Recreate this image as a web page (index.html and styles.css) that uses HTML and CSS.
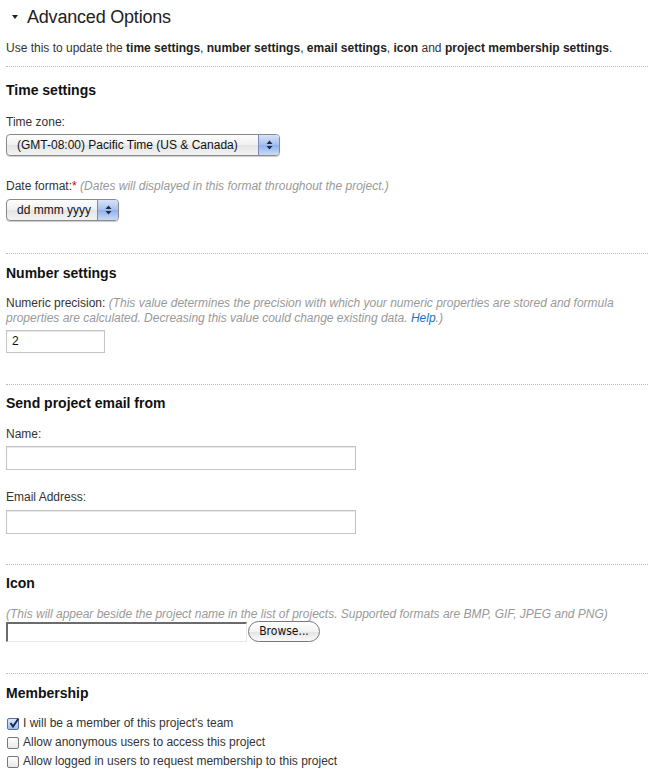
FILE: index.html
```html
<!DOCTYPE html>
<html>
<head>
<meta charset="utf-8">
<link rel="stylesheet" href="styles.css">
</head>
<body>
<div class="page">
  <div class="title">
    <span class="tri"></span>
    <span class="title-text">Advanced Options</span>
  </div>
  <p class="intro">Use this to update the <b>time settings</b>, <b>number settings</b>, <b>email settings</b>, <b>icon</b> and <b>project membership settings</b>.</p>

  <section class="sec sec-time">
    <h2>Time settings</h2>
    <div class="label">Time zone:</div>
    <div class="select sel-tz"><span class="sel-text">(GMT-08:00) Pacific Time (US &amp; Canada)</span><span class="sel-arrows"><svg width="9" height="12" viewBox="0 0 9 12"><path d="M4.5 1.5 L7.5 5 L1.5 5 Z M1.5 7 L7.5 7 L4.5 10.5 Z" fill="#1d2a4a"/></svg></span></div>
    <div class="label label-date">Date format:<span class="req">*</span> <span class="hint">(Dates will displayed in this format throughout the project.)</span></div>
    <div class="select sel-date"><span class="sel-text">dd mmm yyyy</span><span class="sel-arrows"><svg width="9" height="12" viewBox="0 0 9 12"><path d="M4.5 1.5 L7.5 5 L1.5 5 Z M1.5 7 L7.5 7 L4.5 10.5 Z" fill="#1d2a4a"/></svg></span></div>
  </section>

  <section class="sec sec-num">
    <h2>Number settings</h2>
    <div class="label para">Numeric precision: <span class="hint">(This value determines the precision with which your numeric properties are stored and formula properties are calculated. Decreasing this value could change existing data. <a class="help" href="#">Help</a>.)</span></div>
    <div class="textbox tb-num">2</div>
  </section>

  <section class="sec sec-mail">
    <h2>Send project email from</h2>
    <div class="label">Name:</div>
    <div class="textbox tb-wide tb-name"></div>
    <div class="label label-email">Email Address:</div>
    <div class="textbox tb-wide tb-email"></div>
  </section>

  <section class="sec sec-icon">
    <h2>Icon</h2>
    <div class="hint icon-hint">(This will appear beside the project name in the list of projects. Supported formats are BMP, GIF, JPEG and PNG)</div>
    <div class="file">
      <span class="file-box"></span>
      <span class="browse">Browse...</span>
    </div>
  </section>

  <section class="sec sec-member">
    <h2>Membership</h2>
    <ul class="checks">
      <li><span class="cb cb-on"><svg width="12" height="12" viewBox="0 0 12 12"><path d="M2.5 6 L5 9.5 L10.5 1.5" fill="none" stroke="#1b2a55" stroke-width="2"/></svg></span>I will be a member of this project's team</li>
      <li><span class="cb"></span>Allow anonymous users to access this project</li>
      <li><span class="cb"></span>Allow logged in users to request membership to this project</li>
    </ul>
  </section>
</div>
</body>
</html>
```

FILE: styles.css
```css
html, body {
  margin: 0;
  padding: 0;
  background: #fff;
}
body {
  font-family: "Liberation Sans", Arial, sans-serif;
  font-size: 12px;
  color: #333;
}
.page {
  padding: 0 6px;
}
.title {
  display: flex;
  align-items: center;
  height: 22px;
  margin-top: 6px;
}
.tri {
  width: 0;
  height: 0;
  border-left: 3.5px solid transparent;
  border-right: 3.5px solid transparent;
  border-top: 4px solid #222;
  margin-left: 6px;
  margin-right: 9px;
}
.title-text {
  font-size: 18px;
  color: #222;
  letter-spacing: -0.2px;
}
.intro {
  margin: 13px 0 0;
  line-height: 15px;
  height: 15px;
}
.intro b {
  color: #222;
}
.sec {
  border-top: 1px dotted #bbb;
  padding-top: 11px;
  padding-bottom: 31px;
}
.sec-time {
  margin-top: 10px;
  padding-top: 15px;
  padding-bottom: 32px;
}
.sec-mail {
  padding-top: 10px;
  padding-bottom: 30px;
}
.sec-icon {
  padding-top: 10px;
}
.sec h2 {
  margin: 0 0 14px;
  font-size: 14px;
  line-height: 17px;
  color: #111;
}
.sec-time h2 {
  margin-bottom: 16px;
}
.sec-mail h2,
.sec-icon h2 {
  margin-bottom: 15px;
}
.sec-member h2 {
  margin-bottom: 12px;
}
.label {
  line-height: 15px;
}
.label-date {
  margin-top: 23px;
}
.label-email {
  margin-top: 20px;
}
.req {
  color: #d00;
}
.hint {
  color: #999;
  font-style: italic;
}
.help {
  color: #1a6fc4;
  text-decoration: none;
}
.select {
  display: flex;
  align-items: stretch;
  height: 20px;
  border: 1px solid #8a8a8a;
  border-radius: 4px;
  background: linear-gradient(#fdfdfd, #f0f0f0 50%, #e4e4e4 51%, #f3f3f3);
  box-shadow: 0 1px 1px rgba(0,0,0,0.2);
  margin-top: 4px;
  overflow: hidden;
  font-size: 12px;
  color: #111;
}
.sel-date {
  width: 111px;
  margin-top: 5px;
}
.sel-text {
  flex: 1;
  padding-left: 10px;
  line-height: 20px;
}
.sel-arrows {
  width: 20px;
  display: flex;
  align-items: center;
  justify-content: center;
  border-left: 1px solid #7a8ab8;
  background: linear-gradient(#d6e3f8, #a6c0ec 50%, #8fb0e8 51%, #c9dcf8);
}
.sel-tz {
  width: 272px;
}
.textbox {
  box-sizing: border-box;
  height: 23px;
  border: 1px solid #c4c4c4;
  box-shadow: inset 0 1px 1px rgba(0,0,0,0.1);
  padding: 3px 5px;
  line-height: 15px;
  color: #111;
  background: #fff;
}
.tb-num {
  width: 99px;
  margin-top: 4px;
}
.tb-wide {
  width: 350px;
  height: 24px;
}
.tb-name {
  margin-top: 4px;
}
.tb-email {
  margin-top: 5px;
}
.icon-hint {
  line-height: 15px;
  font-size: 12px;
}
.file {
  display: flex;
  align-items: center;
  margin-top: -1px;
}
.file-box {
  box-sizing: border-box;
  width: 241px;
  height: 20px;
  border-top: 2px solid #6b6b6b;
  border-left: 2px solid #6b6b6b;
  border-right: 1px solid #e6e6e6;
  border-bottom: 1px solid #e6e6e6;
  background: #fff;
}
.browse {
  box-sizing: border-box;
  height: 21px;
  width: 72px;
  margin-left: 1px;
  border: 1px solid #777;
  border-radius: 11px;
  background: linear-gradient(#fff, #f2f2f2 50%, #e3e3e3 51%, #fafafa);
  font-family: "DejaVu Sans Condensed", "DejaVu Sans", sans-serif;
  font-stretch: condensed;
  font-size: 12px;
  color: #111;
  text-align: center;
  line-height: 19px;
}
.sec-member {
  padding-bottom: 0;
}
.checks {
  list-style: none;
  margin: 0;
  padding: 0;
}
.checks li {
  display: flex;
  align-items: center;
  height: 19px;
  line-height: 15px;
}
.cb {
  box-sizing: border-box;
  width: 12px;
  height: 12px;
  border: 1px solid #777;
  border-radius: 2px;
  background: linear-gradient(#fff, #e8e8e8);
  margin: 0 4px 0 1px;
  position: relative;
}
.cb-on {
  background: linear-gradient(#dce8fa, #9fbfef);
  border-color: #5570a8;
}
.cb svg {
  position: absolute;
  left: 0;
  top: -2px;
}
```
